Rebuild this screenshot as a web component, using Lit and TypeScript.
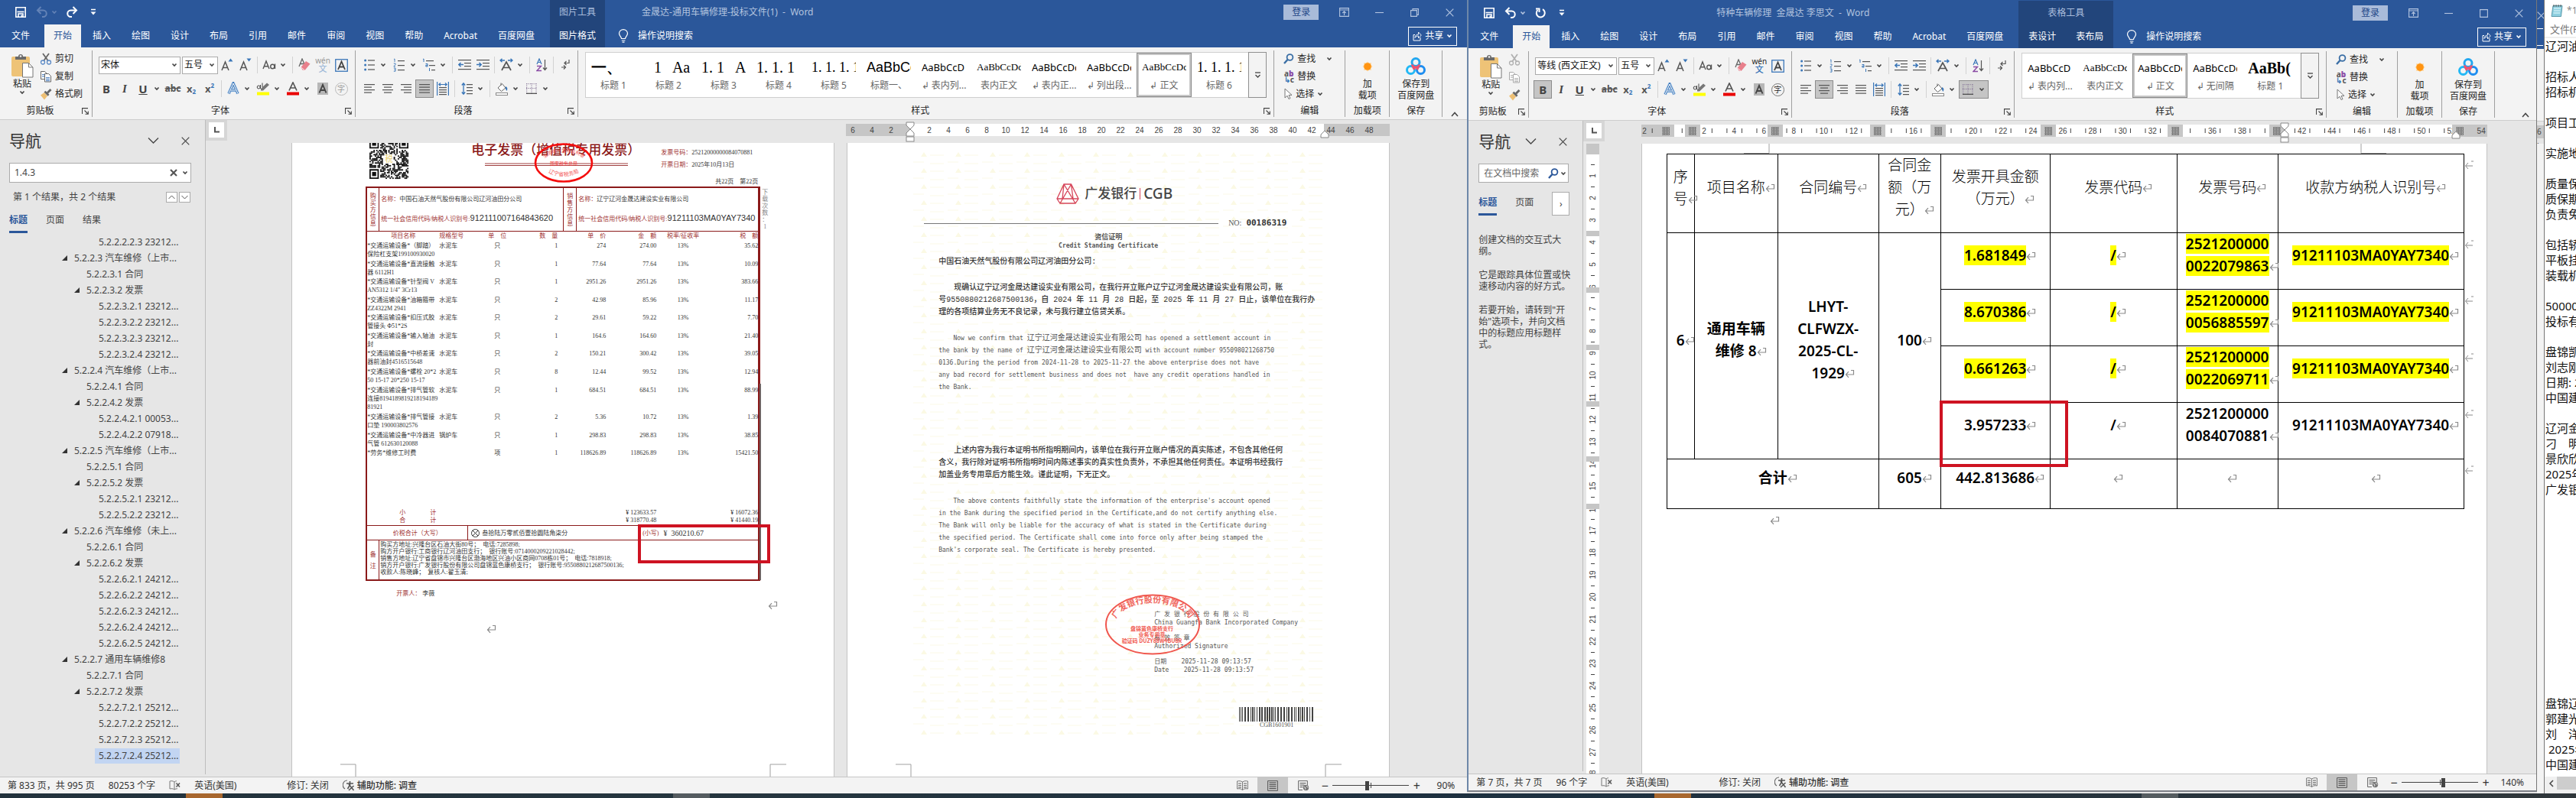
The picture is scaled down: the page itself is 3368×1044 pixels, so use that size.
import { LitElement, html, svg, css, nothing, TemplateResult } from "lit";
import { customElement, property } from "lit/decorators.js";

type Tpl = TemplateResult | typeof nothing;

const box = (w: number, h: number, body: unknown) =>
  html`<svg width=${w} height=${h} viewBox="0 0 ${w} ${h}" fill="none" aria-hidden="true">${body}</svg>`;

const chev = (color = "#444") => box(8, 6, svg`<path d="M1.5 1.5 4 4 6.5 1.5" stroke=${color} stroke-width="1.6"/>`);
const bigChev = () => box(15, 10, svg`<path d="M1 1.5 7.5 8 14 1.5" stroke="#444" stroke-width="1.3"/>`);
const cross = (color = "#444") => box(11, 11, svg`<path d="M.7.7 10.3 10.3M10.3.7.7 10.3" stroke=${color} stroke-width="1.2"/>`);
const ret = () => html`<span class="ret">${box(13, 12, svg`<path d="M8 1.5h3.5v5.500H1.500M5 3.200 1.500 7 5 10.800" stroke="#8a8a8a" stroke-width="1.200"/>`)}</span>`;

const lines = (rows: number[][], color = "#555") =>
  svg`${rows.map(([x, y, w]) => svg`<rect x=${x} y=${y} width=${w} height="1.200" fill=${color}/>`)}`;

const I = {
  save: () => box(16, 16, svg`<path d="M1.800 1.800h12.400v12.400H1.800z" stroke="#fff" stroke-width="1.600"/><path d="M3.500 7.500h9" stroke="#fff" stroke-width="1.600"/><path d="M5 14v-4h6v4" stroke="#fff" stroke-width="1.600"/><path d="M8.500 11.500h1.500V14H8.500z" fill="#fff"/>`),
  undo: (c: string) => box(16, 16, svg`<path d="M2 5.500h7.500a4 4 0 0 1 0 8.500H8" stroke=${c} stroke-width="2"/><path d="M6.500 1 2 5.500 6.500 10" stroke=${c} stroke-width="2"/>`),
  redo: () => box(16, 16, svg`<path d="M14 5.500H6.500a4 4 0 0 0 0 8.500H8" stroke="#fff" stroke-width="2"/><path d="M9.500 1 14 5.500 9.500 10" stroke="#fff" stroke-width="2"/>`),
  repeat: () => box(16, 16, svg`<path d="M4.500 4A5.500 5.500 0 1 0 11 3.200" stroke="#fff" stroke-width="2"/><path d="M2 2.500h4.500V7" stroke="#fff" stroke-width="2"/>`),
  more: () => box(8, 10, svg`<path d="M1 1.500h6" stroke="#fff" stroke-width="1.500"/><path d="M.5 4.500h7L4 8.500z" fill="#fff"/>`),
  ribbonOpt: () => box(13, 12, svg`<path d="M.6.6h11.800v10.800H.6zM.6 3h11.800M6.500 10V5M4.300 7 6.500 4.800 8.700 7" stroke="#b3c4df" stroke-width="1.100"/>`),
  min: () => box(11, 11, svg`<path d="M0 5.500h11" stroke="#b3c4df" stroke-width="1.100"/>`),
  restore: () => box(11, 11, svg`<path d="M.6 2.600h7.800v7.800H.6zM3 2.500V.6h7.400v7.800H8.500" stroke="#b3c4df" stroke-width="1.100"/>`),
  max: () => box(11, 11, svg`<path d="M.6.6h9.800v9.800H.6z" stroke="#b3c4df" stroke-width="1.100"/>`),
  bulb: () => box(14, 18, svg`<path d="M4.500 12.500C4.500 10 1.500 9 1.500 5.800a5.300 5 0 0 1 11 0C12.500 9 9.500 10 9.500 12.500zM4.800 15h4.600M5.500 17.200h3" stroke="#fff" stroke-width="1.200"/>`),
  share: () => box(12, 14, svg`<path d="M3 5.500H1v7.500h9V9" stroke="#fff"/><path d="M3 9.500C3 6.500 5 5 7.500 5V2l3.800 4-3.800 4V7C5.500 7 4 7.700 3 9.500z" stroke="#fff" stroke-width=".9"/>`),
  paste: () => box(30, 32, svg`<rect x="1" y="4" width="24" height="26" rx="2" fill="#eec377"/><path d="M6 8V4h4a3 3 0 0 1 6 0h4v4z" fill="#6a6a6a"/><circle cx="13" cy="3.500" r="1.300" fill="#f3f3f3"/><path d="M15.500 12.500h8l5.500 5.500v13H15.500z" fill="#fff" stroke="#777"/><path d="M23.500 12.500V18H29" stroke="#777"/>`),
  cut: (off: boolean) => box(16, 16, svg`<path d="M4 1l6.500 9M12 1 5.500 10" stroke=${off ? "#b0b0b0" : "#666"} stroke-width="1.800"/><circle cx="4" cy="12.500" r="2.500" stroke=${off ? "#b0b0b0" : "#5b8ac6"} stroke-width="1.300"/><circle cx="12" cy="12.500" r="2.500" stroke=${off ? "#b0b0b0" : "#5b8ac6"} stroke-width="1.300"/>`),
  copy: (off: boolean) => box(16, 16, svg`<path d="M1.500 1.500h5L9 4v7.500H1.500z" fill="#fff" stroke=${off ? "#a8a8a8" : "#666"}/><path d="M6.500 4.500h5l3 3v7.500h-8z" fill="#fff" stroke=${off ? "#a8a8a8" : "#666"}/>${lines([[3, 5, 3], [3, 7.500, 3], [8, 9, 5], [8, 11, 5], [8, 13, 5]], off ? "#b8b8b8" : "#5b8ac6")}`),
  brush: () => box(16, 16, svg`<path d="M1 9.500 6 6l4 4.500-4 5z" fill="#edbf74"/><path d="M5.500 5.500l2-1.800 5 5-1.800 2z" fill="#666"/><path d="M9 5.500 13.500 1 15.500 3l-4.500 4.500z" fill="#666"/>`),
  grow: (up: boolean) => box(18, 18, svg`<path d="M2 16 6.500 5 11 16M3.700 12.500h5.600" stroke="#555" stroke-width="1.500"/>${up ? svg`<path d="M10.500 4.500 13.500.5l3 4z" fill="#3a76b8"/>` : svg`<path d="M10.500.5h6l-3 4z" fill="#3a76b8"/>`}`),
  aa: () => box(18, 14, svg`<path d="M1 12 5 2l4 10M2.500 8.700h5" stroke="#555" stroke-width="1.400"/><ellipse cx="13.300" cy="9" rx="2.600" ry="2.800" stroke="#555" stroke-width="1.400"/><path d="M16.500 5.500V12" stroke="#555" stroke-width="1.400"/>`),
  eraser: () => box(16, 18, svg`<path d="M1 11 5 1l3.500 8M2.500 7.500H7" stroke="#666" stroke-width="1.300"/><path d="M3.500 12 10 4l5.500 3.500-7 8.500-3-.500z" fill="#e8808c"/><path d="M3.500 12l5 4" stroke="#fff" stroke-width=".8"/>`),
  outlineA: () => box(16, 18, svg`<path d="M2 15.500 8 2l6 13.500M4.500 11h7" stroke="#bcd5ef" stroke-width="4.500"/><path d="M2 15.500 8 2l6 13.500M4.500 11h7" stroke="#3a76b8" stroke-width="2.800"/><path d="M2 15.500 8 2l6 13.500M4.500 11h7" stroke="#fff" stroke-width="1"/>`),
  hilite: () => box(18, 18, svg`<path d="M6 9 14 1.500 17 4 9 11.500H6z" fill="#777"/><circle cx="3.200" cy="7" r="2" stroke="#444"/><path d="M5.500 4v5M8 1.500V7" stroke="#444"/><rect x="1" y="13.500" width="16" height="4" fill="#ff0"/>`),
  color: () => box(16, 18, svg`<path d="M3 11.500 8 1l5 10.500M5 8h6" stroke="#555" stroke-width="1.700"/><rect y="13.500" width="16" height="4" fill="#e90000"/>`),
  shadeA: () => box(14, 16, svg`<rect width="14" height="16" fill="#b7b7b7"/><path d="M2.500 13.500 7 3l4.500 10.500M4 10h6" stroke="#444" stroke-width="1.900"/>`),
  boxA: () => box(17, 17, svg`<rect x=".75" y=".75" width="15.500" height="15.500" stroke="#3a76b8" stroke-width="1.300"/><path d="M4 14 8.500 3.500 13 14M5.500 10.500h6" stroke="#444" stroke-width="1.800"/>`),
  bullets: () => box(14, 16, svg`${[2, 8, 14].map((y) => svg`<circle cx="1.600" cy=${y} r="1.500" fill="#3a76b8"/>`)}${lines([[5, 1.400, 9], [5, 7.400, 9], [5, 13.400, 9]])}`),
  numbers: () => box(16, 18, svg`<path d="M1 1.500 2 1v4M.8 7H3v1.500L.8 11H3M.8 13H3v2H1.500M3 15v2.200H.8" stroke="#3a76b8" stroke-width=".9"/>${lines([[6, 3, 9], [6, 9, 9], [6, 15, 9]])}`),
  multi: () => box(18, 18, svg`<path d="M1 1.500 2 1v4M4.500 7.500H7V11H4.800V9.300H7M9.500 13v4" stroke="#3a76b8" stroke-width="1"/>${lines([[5, 3, 10], [9, 9, 8], [12, 15, 5]])}`),
  indent: (inn: boolean) => box(17, 14, svg`${lines([[0, 0, 17], [8, 4, 9], [8, 8, 9], [0, 12, 17]])}${inn ? svg`<path d="M0 6.600h6M3.500 4 6.200 6.600 3.500 9.200" stroke="#3a76b8" stroke-width="1.500"/>` : svg`<path d="M7 6.600H1M3.500 4 .8 6.600 3.500 9.200" stroke="#3a76b8" stroke-width="1.500"/>`}`),
  asian: () => box(18, 18, svg`<path d="M3 16 9 5l6 11M5 12.500h8" stroke="#555" stroke-width="1.700"/><path d="M7 3H1.500M3.500.8 1 3l2.500 2.200M11 3h5.500M14.500.8 17 3l-2.500 2.200" stroke="#3a76b8" stroke-width="1.300"/>`),
  sort: () => box(15, 18, svg`<path d="M1 8 4 1l3 7M2 5.500h4" stroke="#3a76b8" stroke-width="1.200"/><path d="M1 10.500h5.500L1 16.500h6" stroke="#8a4ba5" stroke-width="1.400"/><path d="M11.500 2v13M9 12.500l2.500 3 2.500-3" stroke="#555" stroke-width="1.200"/>`),
  marks: () => box(13, 16, svg`<path d="M11 1v4.500H5M7.500 3 5 5.500 7.500 8M1 11h5M4 8.500 6.500 11 4 13.500" stroke="#555" stroke-width="1.200"/>`),
  left: () => box(14, 14, lines([[0, 1, 14], [0, 4.500, 10], [0, 8, 14], [0, 11.500, 10]])),
  center: () => box(14, 14, lines([[0, 1, 14], [2, 4.500, 10], [0, 8, 14], [2, 11.500, 10]])),
  right: () => box(14, 14, lines([[0, 1, 14], [4, 4.500, 10], [0, 8, 14], [4, 11.500, 10]])),
  just: () => box(14, 14, lines([[0, 1, 14], [0, 4.500, 14], [0, 8, 14], [0, 11.500, 14]])),
  dist: () => box(16, 18, svg`<path d="M.6 0v18M15.400 0v18M3 3.500h10M5 1.500l-2.200 2L5 5.500M11 1.500l2.200 2-2.200 2" stroke="#3a76b8" stroke-width="1.200"/>${lines([[3, 7, 10], [3, 10, 10], [3, 13, 10], [3, 16, 10]])}`),
  spacing: () => box(15, 18, svg`<path d="M3 2v14M.8 4.500 3 1.800l2.200 2.700M.8 13.500 3 16.200l2.200-2.700" stroke="#3a76b8" stroke-width="1.300"/>${lines([[7, 3, 8], [7, 7, 8], [7, 11, 8], [7, 15, 8]])}`),
  bucket: () => box(17, 18, svg`<path d="M3 8 8.500 2.500 13 8l-5.500 4.500z" fill="#fff" stroke="#666"/><path d="M7 5V1.500" stroke="#666"/><path d="M13 6c2.500 1 3 3 1.500 6C13 10 12.500 8 13 6z" fill="#3a76b8"/><rect x=".5" y="14.500" width="15" height="3" fill="#fff" stroke="#888"/>`),
  borders: () => box(14, 14, svg`<path d="M.7 0v13M7 0v13M13 0v13M0 .7h14M0 6.500h14" stroke="#8a7a9a" stroke-dasharray="1.200 1.200"/><path d="M0 13.300h14" stroke="#444" stroke-width="1.200"/>`),
  find: (c = "#3a6ea5") => box(14, 14, svg`<circle cx="8.500" cy="5" r="3.900" stroke=${c} stroke-width="1.800"/><path d="M5.500 8 1 13" stroke=${c} stroke-width="2.400"/>`),
  select: () => box(12, 16, svg`<path d="M2 1v12l3-2.800 2 4.300 2-.9-2-4.200H11z" fill="#fff" stroke="#777"/>`),
  dot: () => box(16, 16, svg`<path d="M8 1.500 10 3.500l3-.5-.5 3L14.500 8l-2 2 .5 3-3-.5-2 2-2-2-3 .5.500-3-2-2 2-2L3 3l3 .5z" fill="#ffd9a0"/><circle cx="8" cy="8" r="4.800" fill="#ff9412"/>`),
  baidu: () => box(26, 24, svg`<circle cx="13" cy="6.500" r="5" stroke="#22a7f0" stroke-width="3"/><circle cx="6.500" cy="16.500" r="5" stroke="#22b8f5" stroke-width="3"/><circle cx="19.500" cy="16.500" r="5" stroke="#1d8df0" stroke-width="3"/><path d="M8.500 9.500c0 5 9 4 9 0M9.500 12.500 11.500 16M16.500 12.500 14.500 16" stroke="#f2506e" stroke-width="3"/>`),
  launch: () => box(9, 9, svg`<path d="M.5 8V.6H8M3.500 3.500 8 8M8.300 4.500v3.800H4.500" stroke="#444" stroke-width="1.100"/>`),
  galMore: () => box(9, 8, svg`<path d="M1 1h7" stroke="#444" stroke-width="1.300"/><path d="M1.500 4 4.500 7l3-3" stroke="#444" stroke-width="1.300"/>`),
  up: () => box(10, 7, svg`<path d="M1 6 5 1.500 9 6" stroke="#444" stroke-width="1.500"/>`),
  book: () => box(15, 13, svg`<path d="M7 2C5 .5 3 .5 1 1v10c2-.5 4-.5 6 1zM7 2C8 1 9 .8 10 .8M7 12c1.500-1 2.500-1.200 4-1.200" stroke="#777"/><path d="M9.500 3.500l4.500 5M14 3.500l-4.500 5" stroke="#555" stroke-width="1.500"/>`),
  a11y: () => box(16, 15, svg`<path d="M6 1a6 6 0 0 0-3 11" stroke="#666" stroke-width="1.200"/><path d="M5 5h9M9.500 2v5L6.500 12M8 6l6.500 8M14.500 8 8 14" stroke="#555" stroke-width="1.600"/>`),
  read: () => box(15, 13, svg`<path d="M7.500 2v10.500M7.500 2C5 .5 3 .5.6 1v10c2.400-.5 4.400-.5 6.900 1.500 2.500-2 4.500-2 6.900-1.500V1C12 .5 10 .5 7.500 2z" stroke="#777"/>${lines([[2, 3.500, 4], [2, 6, 4], [2, 8.500, 4], [9, 3.500, 4], [9, 6, 4], [9, 8.500, 4]], "#777")}`),
  print: () => box(14, 14, svg`<path d="M.6.6h12.800v12.800H.6z" stroke="#555"/>${lines([[2.500, 2.500, 9], [2.500, 5, 9], [2.500, 7.500, 9], [2.500, 10, 9]], "#555")}`),
  web: () => box(15, 14, svg`<path d="M6 12.500H.6V.6h11.800V6" stroke="#666"/>${lines([[2.500, 3, 8], [2.500, 5.500, 6], [2.500, 8, 4]], "#666")}<circle cx="10.500" cy="9.500" r="3.700" fill="#777"/><path d="M8 8.500l2 1.200-.5 2M11 7l1 1.500 1.500.5" stroke="#f3f3f3" stroke-width=".9"/>`),
};

interface Style { sample: string; name: string; kind: string; on?: boolean }

@customElement("word-ribbon")
export class WordRibbon extends LitElement {
  @property({ type: Boolean }) compact = false;
  @property() docTitle = "";
  @property() toolLabel = "";
  @property({ attribute: false }) toolTabs: string[] = [];
  @property() fontName = "";
  @property({ attribute: false }) gallery: Style[] = [];

  static styles = css`
    :host { display: block; font: 12px/16px "Noto Sans", "Noto Sans CJK SC", sans-serif; color: #262626; }
    * { box-sizing: border-box; }
    svg { display: block; flex: none; }
    button { font: inherit; color: inherit; background: none; border: 0; padding: 0; margin: 0; display: inline-flex; align-items: center; justify-content: center; white-space: nowrap; }
    .head { display: grid; grid-template-columns: auto auto 1fr; grid-template-rows: 32px 30px; background: #2b579a; color: #fff; }
    .head.compact { padding-top: 1px; }
    .quick { display: flex; align-items: center; gap: 4px; padding-left: 13px; }
    .q { width: 27px; height: 24px; }
    .u { width: 22px; height: 24px; }
    .c { width: 10px; height: 24px; margin-left: -4px; }
    .title { flex: 1; color: #b3c4df; white-space: pre; }
    .mid { text-align: center; }
    .tool { background: #22457b; color: #a9bcdb; display: flex; align-items: center; padding: 0 12px; justify-content: center; margin-left: 8px; }
    .tooltabs { background: #22457b; display: flex; margin-left: 8px; }
    .tabs { display: flex; gap: 3px; padding-left: 3px; }
    .tab { padding: 0 12px; height: 30px; }
    .file { margin-right: 4px; }
    .tab.on { background: #f3f3f3; color: #2b579a; }
    .compact .tooltabs .tab { padding: 0 13px; }
    .rest { display: flex; align-items: center; }
    .rest.top { padding-left: 48px; }
    .login { width: 46px; height: 20px; background: #a9bbd9; color: #1f4788; margin-right: 10px; }
    .sys { width: 46px; height: 30px; }
    .ask { gap: 12px; padding-left: 17px; }
    .share { margin-left: auto; margin-right: 13px; width: 64px; height: 25px; border: 1px solid #fff; gap: 4px; }
    .bar { display: flex; height: 95px; background: #f3f3f3; border-bottom: 1px solid #cdcdcd; padding: 4px 0 2px; }
    .group { display: flex; flex-direction: column; border-right: 1px solid #a0a0a0; flex: none; height: 87px; }
    .grow { flex: 1 1 0; min-width: 0; }
    .ctl { flex: 1; min-height: 0; }
    .foot { display: flex; height: 16px; align-items: center; }
    .foot span { flex: 1; text-align: center; white-space: nowrap; }
    .foot button { width: 12px; height: 12px; margin-right: 3px; }
    .clip { width: 121px; }
    .compact .clip { width: 79px; }
    .clip .ctl { display: flex; padding-left: 14px; gap: 8px; }
    .pastebtn { flex-direction: column; justify-content: flex-start; padding-top: 4px; line-height: 14px; gap: 1px; }
    .small { display: flex; flex-direction: column; gap: 7px; padding-top: 3px; align-items: flex-start; }
    .small button { height: 16px; gap: 4px; }
    .font { padding-left: 6px; width: 344px; }
    .para { padding-left: 6px; width: 291px; }
    .rows { display: flex; flex-direction: column; gap: 7px; padding-top: 7px; }
    .row { display: flex; height: 24px; align-items: center; }
    .row > .b { width: 24px; height: 24px; flex: none; }
    .row > .d { width: 39px; height: 24px; flex: none; justify-content: flex-start; padding-left: 2px; }
    .d .ic { width: 20px; display: flex; justify-content: center; margin-right: 4px; }
    .on2 { background: #c5c5c5; outline: 1px solid #8c8c8c; outline-offset: -1px; }
    .sep { width: 1px; height: 22px; margin: 0 3px; background: #d2d2d2; flex: none; }
    .combo { display: flex; align-items: center; background: #fff; border: 1px solid #ababab; height: 23px; width: 107px; margin-left: 2px; padding-right: 3px; }
    .combo.size { width: 47px; }
    .combo select { appearance: none; border: 0; background: none; font: inherit; color: #111; flex: 1; min-width: 0; padding: 0 0 0 2px; text-overflow: clip; }
    .g { font-size: 15px; line-height: 18px; color: #444; }
    .bold { font-weight: 700; }
    .ital { font-family: "Liberation Serif", serif; font-style: italic; font-weight: 700; }
    .und { text-decoration: underline; font-weight: 700; }
    .st { font-size: 12px; text-decoration: line-through; font-weight: 700; color: #555; }
    .xx { font-size: 13px; font-weight: 700; color: #555; }
    .xx i { font-size: 8px; font-style: normal; color: #3a76b8; }
    .sub { align-self: flex-end; }
    .sup { align-self: flex-start; }
    .ruby { flex-direction: column; font-size: 10px; line-height: 9px; }
    .ruby b { font-size: 11px; line-height: 11px; font-weight: 500; color: #3a76b8; }
    .ring { width: 17px; height: 17px; border: 1px solid #777; border-radius: 50%; font-size: 10px; line-height: 15px; text-align: center; }
    .dim { opacity: .45; }
    .galwrap { padding: 2px 9px 0; }
    .gal { display: flex; height: 60px; background: #fff; border: 1px solid #cfcfcf; }
    .items { flex: 1; display: flex; min-width: 0; overflow: hidden; }
    .item { flex: none; width: 72px; height: 58px; border: 3px solid transparent; flex-direction: column; padding: 0 4px; align-items: center; overflow: hidden; }
    .item.on { border-color: #c6c6c6; outline: 1px solid #8a8a8a; outline-offset: -1px; }
    .sample { height: 28px; width: 58px; overflow: hidden; line-height: 28px; white-space: pre; text-align: left; color: #000; font-size: 12px; }
    .name { height: 18px; color: #666; margin-top: 2px; }
    .h { font-size: 20px; font-family: "Liberation Serif", "Noto Sans CJK SC", serif; }
    .m { font-size: 18px; font-family: "Liberation Serif", serif; }
    .big { font-size: 18px; font-family: "Liberation Sans", sans-serif; }
    .s { font-family: "Liberation Serif", serif; font-size: 13px; }
    .n { font-size: 13px; }
    .xl { font-size: 20px; font-family: "Liberation Serif", serif; font-weight: 700; }
    .galmore { width: 24px; border: 1px solid #8f8f8f; margin: -1px; background: #f3f3f3; }
    .edit { width: 93px; }
    .edit .small { padding-left: 12px; }
    .addin { width: 58px; }
    .baidu { width: 69px; }
    .tall { width: 100%; height: 68px; flex-direction: column; line-height: 15px; }
    .tall .pic { height: 34px; display: flex; align-items: center; padding-top: 4px; }
    .tail { width: 32px; display: flex; align-items: flex-end; justify-content: center; padding-bottom: 1px; }
    .compact .tail { width: 54px; justify-content: flex-end; padding-right: 9px; }
    .rep { display: grid; font-size: 10px; line-height: 8px; width: 14px; font-weight: 700; color: #555; }
    .rep b { color: #8a4ba5; }
    .rep em { color: #3a76b8; font-style: normal; }
  `;

  private b(icon: unknown, label: string, cls = "") {
    return html`<button class="b ${cls}" aria-label=${label}>${icon}</button>`;
  }
  private d(icon: unknown, label: string, cls = "") {
    return html`<button class="d ${cls}" aria-label=${label}><span class="ic">${icon}</span>${chev()}</button>`;
  }

  render() {
    const tabs = ["文件", "开始", "插入", "绘图", "设计", "布局", "引用", "邮件", "审阅", "视图", "帮助", "Acrobat", "百度网盘"];
    const c = this.compact;
    const sep = html`<span class="sep"></span>`;
    const foot = (t: string, l = true) => html`<div class="foot"><span>${t}</span>${l ? html`<button aria-label="${t}设置">${I.launch()}</button>` : nothing}</div>`;
    const pale = "#b3c4df";
    return html`
      <header class="head ${c ? "compact" : ""}">
        <div class="quick">
          <button class="q" aria-label="保存">${I.save()}</button>
          <button class="u" aria-label="撤消">${I.undo(c ? "#fff" : "#6483b7")}</button>
          <button class="c" aria-label="撤消列表">${chev(c ? "#b3c4df" : "#6483b7")}</button>
          <button class="q" aria-label="重复">${c ? I.repeat() : I.redo()}</button>
          <button class="u" aria-label="自定义">${I.more()}</button>
          ${c ? html`<span class="title mid">${this.docTitle}</span>` : nothing}
        </div>
        <div class="tool">${this.toolLabel}</div>
        <div class="rest top">
          <span class="title">${c ? "" : this.docTitle}</span>
          <button class="login">登录</button>
          <button class="sys" aria-label="功能区显示选项">${I.ribbonOpt()}</button>
          <button class="sys" aria-label="最小化">${I.min()}</button>
          <button class="sys" aria-label="还原">${c ? I.max() : I.restore()}</button>
          <button class="sys" aria-label="关闭">${cross(pale)}</button>
        </div>
        <nav class="tabs">${tabs.map((t, i) => html`<button class="tab ${["file", "on"][i] ?? ""}">${t}</button>`)}</nav>
        <div class="tooltabs">${this.toolTabs.map((t) => html`<button class="tab">${t}</button>`)}</div>
        <div class="rest">
          <button class="ask">${I.bulb()}操作说明搜索</button>
          <button class="share">${I.share()}共享${chev("#fff")}</button>
        </div>
      </header>
      <div class="bar ${c ? "compact" : ""}">
        <section class="group clip">
          <div class="ctl">
            <button class="pastebtn">${I.paste()}<span>粘贴</span>${chev()}</button>
            <div class="small">
              <button aria-label="剪切">${I.cut(c)}${c ? nothing : "剪切"}</button>
              <button aria-label="复制">${I.copy(c)}${c ? nothing : "复制"}</button>
              <button aria-label="格式刷">${I.brush()}${c ? nothing : "格式刷"}</button>
            </div>
          </div>
          ${foot("剪贴板")}
        </section>
        <section class="group font">
          <div class="ctl rows">
            <div class="row">
              <label class="combo"><select aria-label="字体"><option>${this.fontName}</option></select>${chev()}</label>
              <label class="combo size"><select aria-label="字号"><option>五号</option></select>${chev()}</label>
              ${this.b(I.grow(true), "增大字号")}${this.b(I.grow(false), "减小字号")}${sep}
              ${this.d(I.aa(), "更改大小写")}${sep}
              ${this.b(I.eraser(), "清除格式")}
              <button class="b ruby ${c ? "" : "dim"}"><span>wén</span><b>文</b></button>
              ${this.b(I.boxA(), "字符边框")}
            </div>
            <div class="row">
              <button class="b g bold ${c ? "on2" : ""}">B</button><button class="b g ital">I</button>
              ${this.d(html`<span class="g und">U</span>`, "下划线")}
              <button class="b st">abc</button><button class="b xx">x<i class="sub">2</i></button><button class="b xx">x<i class="sup">2</i></button>${sep}
              ${this.d(I.outlineA(), "文本效果")}${this.d(I.hilite(), "突出显示")}${this.d(I.color(), "字体颜色")}
              ${this.b(I.shadeA(), "字符底纹")}
              <button class="b ${c ? "" : "dim"}"><span class="ring">字</span></button>
            </div>
          </div>
          ${foot("字体")}
        </section>
        <section class="group para">
          <div class="ctl rows">
            <div class="row">
              ${this.d(I.bullets(), "项目符号")}${this.d(I.numbers(), "编号")}${this.d(I.multi(), "多级列表")}${sep}
              ${this.b(I.indent(false), "减少缩进")}${this.b(I.indent(true), "增加缩进")}${sep}
              ${this.d(I.asian(), "中文版式")}${sep}${this.b(I.sort(), "排序")}${sep}${this.b(I.marks(), "编辑标记")}
            </div>
            <div class="row">
              ${this.b(I.left(), "左对齐")}${this.b(I.center(), "居中", c ? "on2" : "")}${this.b(I.right(), "右对齐")}
              ${this.b(I.just(), "两端对齐", c ? "" : "on2")}${this.b(I.dist(), "分散对齐")}${sep}
              ${this.d(I.spacing(), "行距")}${sep}${this.d(I.bucket(), "底纹")}${this.d(I.borders(), "边框", c ? "on2" : "")}
            </div>
          </div>
          ${foot("段落")}
        </section>
        <section class="group grow">
          <div class="ctl galwrap">
            <div class="gal">
              <div class="items">
                ${this.gallery.map((s) => html`<button class="item ${s.on ? "on" : ""}"><span class="sample ${s.kind}">${s.sample}</span><span class="name">${s.name}</span></button>`)}
              </div>
              <button class="galmore" aria-label="其他样式">${I.galMore()}</button>
            </div>
          </div>
          ${foot("样式")}
        </section>
        <section class="group edit">
          <div class="ctl small">
            <button>${I.find()}查找<span class="c"></span>${chev()}</button>
            <button><span class="rep"><span>a<b>b</b></span><span><em>↳</em>c</span></span>替换</button>
            <button>${I.select()}选择${chev()}</button>
          </div>
          ${foot("编辑", false)}
        </section>
        <section class="group addin">
          <div class="ctl"><button class="tall"><span class="pic">${I.dot()}</span><span>加</span><span>载项</span></button></div>
          ${foot("加载项", false)}
        </section>
        <section class="group baidu">
          <div class="ctl"><button class="tall"><span class="pic">${I.baidu()}</span><span>保存到</span><span>百度网盘</span></button></div>
          ${foot("保存", false)}
        </section>
        <div class="tail"><button aria-label="折叠功能区">${I.up()}</button></div>
      </div>`;
  }
}

@customElement("word-status")
export class WordStatus extends LitElement {
  @property() pages = "";
  @property() words = "";
  @property() zoom = "";
  @property({ type: Number }) level = 50;

  static styles = css`
    :host { display: flex; flex: none; height: 22px; background: #f3f3f3; border-top: 1px solid #c6c6c6; font: 12px/16px "Noto Sans", "Noto Sans CJK SC", sans-serif; color: #333; align-items: center; }
    svg { display: block; }
    button { font: inherit; color: inherit; background: none; border: 0; padding: 0; display: flex; align-items: center; justify-content: center; gap: 3px; height: 100%; white-space: nowrap; }
    .left { display: flex; align-items: center; gap: 18px; padding-left: 10px; flex: 1; height: 100%; }
    .rev { margin-left: 48px; }
    .acc { font-weight: 500; }
    .v { width: 40px; }
    .v.on { background: #c6c6c6; }
    .pm { width: 16px; font-size: 16px; }
    input { appearance: none; width: 100px; height: 14px; margin: 0 2px; background: linear-gradient(#444, #444) center / 100% 1px no-repeat, linear-gradient(#444, #444) center / 1px 7px no-repeat; }
    input::-webkit-slider-thumb { appearance: none; width: 5px; height: 12px; background: #444; }
    .z { width: 38px; margin: 0 16px 0 4px; justify-content: flex-end; }
  `;

  render() {
    return html`
      <div class="left">
        <button>${this.pages}</button><button>${this.words}</button><button aria-label="校对">${I.book()}</button><button>英语(美国)</button>
        <button class="rev">修订: 关闭</button><button class="acc">${I.a11y()}辅助功能: 调查</button>
      </div>
      <button class="v" aria-label="阅读视图">${I.read()}</button>
      <button class="v on" aria-label="页面视图">${I.print()}</button>
      <button class="v" aria-label="Web 版式">${I.web()}</button>
      <button class="pm">−</button>
      <input type="range" aria-label="缩放" .value=${String(this.level)} />
      <button class="pm">+</button>
      <button class="z">${this.zoom}</button>`;
  }
}

interface Node { level: number; text: string; open?: boolean; on?: boolean }
const tree: Node[] = [
  { level: 3, text: "5.2.2.2.2.3 23212..." },
  { level: 1, text: "5.2.2.3 汽车维修（上市...", open: true },
  { level: 2, text: "5.2.2.3.1 合同" },
  { level: 2, text: "5.2.2.3.2 发票", open: true },
  { level: 3, text: "5.2.2.3.2.1 23212..." },
  { level: 3, text: "5.2.2.3.2.2 23212..." },
  { level: 3, text: "5.2.2.3.2.3 23212..." },
  { level: 3, text: "5.2.2.3.2.4 23212..." },
  { level: 1, text: "5.2.2.4 汽车维修（上市...", open: true },
  { level: 2, text: "5.2.2.4.1 合同" },
  { level: 2, text: "5.2.2.4.2 发票", open: true },
  { level: 3, text: "5.2.2.4.2.1 00053..." },
  { level: 3, text: "5.2.2.4.2.2 07918..." },
  { level: 1, text: "5.2.2.5 汽车维修（上市...", open: true },
  { level: 2, text: "5.2.2.5.1 合同" },
  { level: 2, text: "5.2.2.5.2 发票", open: true },
  { level: 3, text: "5.2.2.5.2.1 23212..." },
  { level: 3, text: "5.2.2.5.2.2 23212..." },
  { level: 1, text: "5.2.2.6 汽车维修（未上...", open: true },
  { level: 2, text: "5.2.2.6.1 合同" },
  { level: 2, text: "5.2.2.6.2 发票", open: true },
  { level: 3, text: "5.2.2.6.2.1 24212..." },
  { level: 3, text: "5.2.2.6.2.2 24212..." },
  { level: 3, text: "5.2.2.6.2.3 24212..." },
  { level: 3, text: "5.2.2.6.2.4 24212..." },
  { level: 3, text: "5.2.2.6.2.5 24212..." },
  { level: 1, text: "5.2.2.7 通用车辆维修8", open: true },
  { level: 2, text: "5.2.2.7.1 合同" },
  { level: 2, text: "5.2.2.7.2 发票", open: true },
  { level: 3, text: "5.2.2.7.2.1 25212..." },
  { level: 3, text: "5.2.2.7.2.2 25212..." },
  { level: 3, text: "5.2.2.7.2.3 25212..." },
  { level: 3, text: "5.2.2.7.2.4 25212...", on: true },
];

const items: [string[], string, string, string, string, string, string][] = [
  [["*交通运输设备*（脚踏）", "保险杠支架199100930020"], "水泥车", "只", "1", "274", "274.00", "35.62"],
  [["*交通运输设备*直流接触", "器 6112H1"], "水泥车", "只", "1", "77.64", "77.64", "10.09"],
  [["*交通运输设备*针型阀 V", "AN5312 1/4″ 3Cr13"], "水泥车", "只", "1", "2951.26", "2951.26", "383.66"],
  [["*交通运输设备*油箱箍带", "ZZ4322M 2941"], "水泥车", "只", "2", "42.98", "85.96", "11.17"],
  [["*交通运输设备*扣压式胶", "管接头 Φ51*2S"], "水泥车", "只", "2", "29.61", "59.22", "7.70"],
  [["*交通运输设备*输入轴油", "封"], "水泥车", "只", "1", "164.6", "164.60", "21.40"],
  [["*交通运输设备*中桥差速", "器前油封4516515648"], "水泥车", "只", "2", "150.21", "300.42", "39.05"],
  [["*交通运输设备*螺栓 20*2", "50 15-17 20*250 15-17"], "水泥车", "只", "8", "12.44", "99.52", "12.94"],
  [["*交通运输设备*排气管软", "连接8194189819218194189", "81921"], "水泥车", "只", "1", "684.51", "684.51", "88.99"],
  [["*交通运输设备*排气管接", "口垫 190003802576"], "水泥车", "只", "2", "5.36", "10.72", "1.39"],
  [["*交通运输设备*中冷器进", "气管 612630120088"], "锅炉车", "只", "1", "298.83", "298.83", "38.85"],
  [["*劳务*维修工时费"], "", "项", "1", "118626.89", "118626.89", "15421.50"],
];

const notes = [
  "辽河油田", "", "招标人:", "招标机构", "", "项目工程", "", "实施地点", "", "质量保证", "质保期内", "负责免费", "",
  "包括轿车", "平板挂车", "装载机等", "", "50000元", "投标有效", "", "盘锦凯达", "刘志刚", "日期: 20", "中国建设", "",
  "辽河金晟", "刁　明宇", "景欣欣", "2025年", "广发银行", "", "", "", "", "", "", "", "", "", "", "", "", "",
  "盘锦辽河", "郭建光", "刘　洋", " 2025年", "中国建设",
];

const qr = () => {
  const n = 29;
  const cells: unknown[] = [];
  let seed = 77;
  const inFinder = (x: number, y: number) => (x < 8 && y < 8) || (x > n - 9 && y < 8) || (x < 8 && y > n - 9);
  for (let y = 0; y < n; y++)
    for (let x = 0; x < n; x++) {
      seed = (seed * 1103515 + 12345) % 2147483648;
      const mid = Math.abs(x - 14) < 4 && Math.abs(y - 14) < 4;
      if (!inFinder(x, y) && !mid && (seed >> 12) % 2) cells.push(svg`<rect x=${x} y=${y} width="1.050" height="1.050"/>`);
    }
  const finder = (x: number, y: number) => svg`<path fill-rule="evenodd" d="M${x} ${y}h7v7h-7zM${x + 1} ${y + 1}v5h5v-5z"/><rect x=${x + 2} y=${y + 2} width="3" height="3"/>`;
  return html`<svg class="qr" width="51" height="47" viewBox="0 3 29 26" preserveAspectRatio="none" fill="#111" aria-hidden="true">
    ${cells}${finder(0, 0)}${finder(22, 0)}${finder(0, 22)}
    <text x="11.500" y="17" font-size="6" fill="#e7cf72">税</text></svg>`;
};

/* Horizontal ruler scale, drawn as one graphic: shaded margins, numbers, ticks and column handles. */
const handle = (x: number, top: number) => svg`
  <path d="M${x - 5} ${top}h10v4l-5 5-5-5z" fill="#fff" stroke="#888"/>
  <path d="M${x - 5} ${top + 18}v-4l5-5 5 5v4z" fill="#fff" stroke="#888"/>
  <rect x=${x - 5} y=${top + 19} width="10" height="6" fill="#fff" stroke="#888"/>`;
const rightMark = (x: number) => svg`<path d="M${x - 5} 23v-4l5-5 5 5v4z" fill="#fff" stroke="#888"/>`;

@customElement("app-root")
export class AppRoot extends LitElement {
  static styles = css`
    :host { display: flex; flex-direction: column; height: 100vh; overflow: hidden; background: #e6e6e6; font: 12px/16px "Noto Sans", "Noto Sans CJK SC", sans-serif; color: #444; }
    * { box-sizing: border-box; }
    svg { display: block; flex: none; overflow: visible; }
    p, h1, h2, ul { margin: 0; padding: 0; font-weight: 400; }
    button { font: inherit; color: inherit; background: none; border: 0; padding: 0; display: inline-flex; align-items: center; justify-content: center; }
    .desk { flex: 1; min-height: 0; display: flex; }
    .win { display: flex; flex-direction: column; min-width: 0; overflow: hidden; background: #e6e6e6; }
    .one { flex: 1920 1 0; }
    .two { flex: 1397 1 0; border-left: 2px solid #6d87a8; border-right: 1px solid #777; border-bottom: 2px solid #7d8087; margin-bottom: 2px; }
    .behind { flex: none; width: 9px; display: flex; flex-direction: column; overflow: hidden; background: #e6e6e6; }
    .behind .blue { height: 64px; background: #2b579a; padding: 15px 0 0 0; }
    .behind .blue i { display: block; width: 8px; height: 23px; border: solid #fff; border-width: 1px 0; margin-top: 11px; }
    .behind .pale { height: 95px; background: #f3f3f3; border-bottom: 1px solid #cdcdcd; }
    .behind .num { height: 17px; margin-top: 5px; background: #c6c6c6; line-height: 17px; font-size: 10px; }
    .behind .sheet { flex: 1; margin-top: 7px; background: #f3f3f3; }
    .note { flex: 41 1 0; min-width: 0; background: #fff; border-left: 1px solid #777; overflow: hidden; display: flex; flex-direction: column; color: #111; }
    .note .cap { height: 28px; display: flex; align-items: center; gap: 4px; padding-left: 8px; color: #888; flex: none; }
    .note .menu { height: 22px; border-bottom: 2px solid #eee; padding: 2px 0 0 7px; color: #777; font-size: 13px; white-space: nowrap; flex: none; }
    .note pre { flex: 1; margin: 0; padding: 0 0 0 1px; font: 15px/20px "Noto Sans", "Noto Sans CJK SC", sans-serif; overflow: hidden; }
    .note .sb { height: 17px; display: flex; background: #f0f0f0; align-items: center; padding-left: 6px; gap: 4px; flex: none; }
    .note .sb i { flex: 1; height: 100%; background: #cdcdcd; }
    .note .low { height: 5px; background: #f0f0f0; flex: none; }
    .taskbar { height: 6px; flex: none; background: linear-gradient(90deg, #22323c, #26363f 30%, #1d3040 60%, #30373b); display: flex; }
    .taskbar i { width: 48px; height: 6px; margin-left: 243px; background: #a8672e; }
    .taskbar .g { margin-left: 589px; background: #555c60; }
    .taskbar .far { margin-left: 1235px; }

    .work { flex: 1; min-height: 0; display: flex; }
    .pane { flex: none; width: 269px; margin-bottom: 3px; border-right: 1px solid #bdbdbd; padding: 13px 0 0 12px; overflow: hidden; }
    .two .pane { width: 150px; padding-left: 13px; }
    .ph { display: flex; align-items: center; height: 28px; padding-right: 18px; }
    .ph h2 { font-size: 21px; line-height: 28px; color: #333; flex: 1; white-space: nowrap; }
    .ph button { width: 16px; height: 16px; }
    .ph .x { margin-left: 26px; }
    .find { display: flex; align-items: center; gap: 6px; width: 238px; height: 26px; margin-top: 15px; background: #fff; border: 1px solid #ababab; padding: 0 3px 0 6px; }
    .find input { flex: 1; min-width: 0; border: 0; background: none; padding: 0; font: inherit; color: #444; }
    .find input::placeholder { color: #666; }
    .two .find { width: 118px; height: 25px; gap: 2px; padding-right: 2px; }
    .res { display: flex; align-items: center; height: 14px; margin-top: 12px; padding: 0 19px 0 5px; gap: 2px; }
    .res span { flex: 1; }
    .res button { width: 15px; height: 14px; border: 1px solid #ababab; background: #fff; }
    .ptabs { display: flex; gap: 24px; margin-top: 15px; align-items: flex-start; }
    .ptabs .t { height: 25px; padding-bottom: 6px; border-bottom: 3px solid transparent; }
    .ptabs .t.on { color: #2b579a; font-weight: 700; border-color: #2b579a; }
    .two .ptabs { margin-top: 12px; align-items: flex-end; }
    .more { width: 23px; height: 31px; background: #fff; border: 1px solid #ababab; }
    .tree { list-style: none; margin-top: 1px; }
    .tree li { display: flex; align-items: center; height: 21px; white-space: nowrap; }
    .tree .mk { width: 16px; flex: none; }
    .l1 { padding-left: 69px; }
    .l2 { padding-left: 85px; }
    .l3 { padding-left: 101px; }
    .tree button { height: 20px; }
    .tree .on button { background: #c2d5f2; padding: 0 2px 0 5px; margin-left: -5px; }
    .hint { margin-top: 24px; width: 124px; line-height: 15px; }
    .hint p + p { margin-top: 16px; }

    .canvas { flex: 1; min-width: 0; display: grid; grid-template-columns: 28px 1fr 17px; grid-template-rows: 30px 1fr; overflow: hidden; }
    .corner { background: #d6d6d6; height: 27px; padding: 3px 0 0 4px; }
    .corner button { width: 20px; height: 20px; background: #fff; }
    .centre { display: flex; justify-content: center; gap: 16px; min-width: 0; min-height: 0; }
    .blank { width: 710px; flex: none; }
    .ruler { flex: none; font: 10px/10px "Liberation Sans", sans-serif; fill: #444; }
    .paper { position: relative; flex: none; width: 710px; background: #fff; border-left: 1px solid #c3c3c3; border-right: 1px solid #c3c3c3; overflow: hidden; }
    .two .paper { width: 1106px; }
    .two .ret { display: inline-block; width: 0; height: 12px; }
    .vr { margin-left: 4px; margin-top: 0; font: 10px/10px "Liberation Sans", sans-serif; fill: #444; overflow: hidden; }
    .corners { position: absolute; left: 0; bottom: 0; }
    .floating { position: absolute; }
    .a1 { left: 622px; top: 599px; }
    .a2 { left: 254px; top: 630px; }
    .redbox { position: absolute; border: 4px solid #ce1322; }

    .inv { width: 516px; margin-left: 96px; font: 8px/11px "Liberation Serif", "Noto Sans CJK SC", serif; color: #333; position: relative; }
    .inv .red { color: #a03030; }
    .ih { display: grid; grid-template-columns: 138px 1fr 130px; height: 57px; }
    .qr { margin-left: 5px; font-family: "Noto Sans CJK SC", sans-serif; }
    .it { width: 223px; font-size: 17px; line-height: 20px; font-weight: 500; color: #8b1a1a; white-space: nowrap; }
    .im { padding-top: 5px; line-height: 16px; white-space: nowrap; }
    .im div:last-child { text-align: right; padding-right: 3px; line-height: 28px; }
    .frame { height: 516px; border: 2px solid #8b1a1a; border-right-width: 3px; display: flex; flex-direction: column; }
    .party { display: grid; grid-template-columns: 16px 241px 17px 1fr; height: 57px; border-bottom: 1px solid #8b1a1a; flex: none; }
    .party > * { border-right: 1px solid #8b1a1a; }
    .party > :last-child { border: 0; }
    .vert { display: flex; align-items: center; justify-content: center; text-align: center; line-height: 9px; color: #a03030; }
    .who { padding: 9px 0 0 2px; white-space: nowrap; }
    .who p + p { margin-top: 13px; }
    .id { font: 11px/12px "Liberation Sans", sans-serif; }
    .items { width: 100%; height: 296px; table-layout: fixed; border-collapse: collapse; flex: none; }
    .items td, .items th { padding: 0; vertical-align: top; text-align: right; font-weight: 400; white-space: nowrap; }
    .items th { height: 13px; color: #a03030; }
    .items .L { text-align: left; }
    .items .C { text-align: center; }
    .fill { flex: 1; }
    .sum { display: grid; grid-template-columns: 40px 256px 39px 1fr; height: 10px; line-height: 10px; padding-left: 42px; flex: none; white-space: nowrap; }
    .sum :last-child { text-align: right; }
    .total { display: flex; align-items: center; height: 20px; border-top: 1px solid #8b1a1a; border-bottom: 1px solid #8b1a1a; margin-top: 1px; flex: none; }
    .total .k { width: 132px; height: 100%; border-right: 1px solid #8b1a1a; display: flex; align-items: center; justify-content: center; }
    .total .w { width: 228px; display: flex; align-items: center; gap: 3px; padding-left: 4px; }
    .total .n { font-size: 10px; padding-left: 6px; white-space: pre; }
    .remark { display: grid; grid-template-columns: 16px 1fr; height: 51px; flex: none; line-height: 9px; }
    .remark .vert { border-right: 1px solid #8b1a1a; line-height: 15px; }
    .remark div { padding: 1px 0 0 1px; white-space: nowrap; }
    .by { padding: 11px 0 0 40px; white-space: pre; }
    .side { position: absolute; left: 517px; top: 60px; width: 10px; line-height: 9px; color: #888; text-align: center; }
    .seal { position: absolute; left: 220px; top: 0; font-family: "Noto Sans CJK SC", sans-serif; }
    .shadow { position: absolute; left: 515px; top: 315px; width: 2px; height: 257px; background: #6f6262; }

    .cert { position: relative; margin: 10px 0 0 84px; width: 540px; height: 769px; padding-top: 41px; font: 8px/16px "DejaVu Sans Mono", "Noto Sans CJK SC", monospace; color: #555; }
    .bg { position: absolute; left: 0; top: 0; }
    .logo { position: relative; display: flex; align-items: center; height: 30px; padding-left: 189px; gap: 7px; color: #444; font: 500 17px/30px "Noto Sans", "Noto Sans CJK SC", sans-serif; white-space: nowrap; }
    .logo i { width: 1px; height: 15px; background: #d6455a; margin: 0 -3px; }
    .logo .en { font-size: 19px; }
    .no { position: relative; display: flex; align-items: center; height: 16px; margin-top: 16px; padding-left: 16px; }
    .no i { width: 385px; height: 1px; background: #777; margin-right: 13px; }
    .no span { font: 10px/16px "Liberation Serif", serif; margin-right: 6px; }
    .no b { font-size: 11px; color: #333; }
    .ct { position: relative; margin-top: 5px; line-height: 11px; text-align: center; padding-right: 26px; font-weight: 700; color: #555; }
    .ct h1 { font-size: 9px; line-height: 11px; font-weight: 700; }
    .blk { position: relative; padding-left: 35px; white-space: pre; margin-top: 18px; }
    .blk.cn, .blk em { font-size: 10px; font-style: normal; }
    .blk em { line-height: 10px; }
    .blk.cn { font-weight: 500; color: #333; font-family: "Liberation Mono", "Noto Sans CJK SC", monospace; }
    .blk.cn s { text-decoration: none; font-size: 8px; font-weight: 700; }
    .blk.first { margin-top: 8px; }
    .blk.late { margin-top: 67px; }
    .sign { position: relative; padding-left: 317px; margin-top: 70px; line-height: 11px; white-space: pre; }
    .sign p:nth-child(odd) { margin-top: 9px; }
    .sign p:first-child { margin-top: 0; }
    .bar { position: relative; margin: 43px 0 0 428px; width: 98px; text-align: center; font: 8px/10px "Liberation Serif", serif; }
    .stamp { position: absolute; left: 252px; top: 579px; font: 700 9px/10px "Noto Sans CJK SC", sans-serif; }

    .doc { padding: 13px 0 0 32px; position: relative; color: #000; }
    .tb { border-collapse: collapse; table-layout: fixed; width: 1042px; font: 19px/29px "Noto Sans", "Noto Sans CJK SC", sans-serif; font-weight: 600; }
    .tb th, .tb td { border: 1px solid #000; padding: 0 0 15px; text-align: center; vertical-align: middle; }
    .tb th { font-weight: 300; white-space: nowrap; }
    .tb mark { background: #ff0; color: inherit; }
    .after { padding-left: 135px; margin-top: 9px; }
    .ends { position: absolute; left: 1075px; top: 23px; }
    .tops { position: absolute; left: 0; top: 0; }
  `;

  private pane1() {
    return html`<aside class="pane">
      <div class="ph"><h2>导航</h2><button aria-label="选项">${bigChev()}</button><button class="x" aria-label="关闭">${cross()}</button></div>
      <div class="find"><input aria-label="搜索" value="1.4.3" /><button aria-label="清除">${box(10, 10, svg`<path d="M1 1l8 8M9 1 1 9" stroke="#555" stroke-width="2.200"/>`)}</button>${chev()}</div>
      <div class="res"><span>第 1 个结果，共 2 个结果</span>
        <button aria-label="上一个">${box(9, 6, svg`<path d="M.5 5 4.500 1l4 4" stroke="#555"/>`)}</button>
        <button aria-label="下一个">${box(9, 6, svg`<path d="M.5 1l4 4 4-4" stroke="#555"/>`)}</button></div>
      <div class="ptabs"><button class="t on">标题</button><button class="t">页面</button><button class="t">结果</button></div>
      <ul class="tree">
        ${tree.map((n) => html`<li class="l${n.level} ${n.on ? "on" : ""}"><span class="mk">${n.open ? box(7, 7, svg`<path d="M7 0v7H0z" fill="#333"/>`) : nothing}</span><button>${n.text}</button></li>`)}
      </ul>
    </aside>`;
  }

  private ruler1() {
    const nums = Array.from({ length: 28 }, (_, i) => i * 2 - 6).filter((n) => n !== 0 && n <= 48);
    return html`<svg class="ruler" width="710" height="30" aria-hidden="true">
      <rect x="-1" y="5" width="711" height="16" fill="#c6c6c6"/><rect x="83" y="5" width="541" height="16" fill="#fff"/>
      ${nums.map((n) => svg`<text x=${83 + n * 12.5} y="17" text-anchor="middle">${Math.abs(n)}</text>`)}
      ${handle(83, 3)}${rightMark(625)}
    </svg>`;
  }

  private invoice() {
    const th = (t: string, c = "") => html`<th class=${c}>${t}</th>`;
    const w = [94, 55, 42, 58, 63, 66, 70, 63];
    return html`<div class="paper">
      <div class="inv">
        <div class="ih">
          ${qr()}
          <div><h1 class="it">电子发票（增值税专用发票）</h1></div>
          <div class="im"><div><span class="red">发票号码：</span>25212000000084070881</div><div><span class="red">开票日期：</span>2025年10月13日</div><div>共22页　第22页</div></div>
        </div>
        <div class="frame">
          <div class="party">
            <div class="vert">购<br />买<br />方<br />信<br />息</div>
            <div class="who"><p><span class="red">名称：</span>中国石油天然气股份有限公司辽河油田分公司</p><p><span class="red">统一社会信用代码/纳税人识别号:</span><span class="id">912111007164843620</span></p></div>
            <div class="vert">销<br />售<br />方<br />信<br />息</div>
            <div class="who"><p><span class="red">名称：</span>辽宁辽河金晟达建设实业有限公司</p><p><span class="red">统一社会信用代码/纳税人识别号:</span><span class="id">91211103MA0YAY7340</span></p></div>
          </div>
          <table class="items">
            <colgroup>${w.map((x) => html`<col width=${x} />`)}</colgroup>
            <thead><tr>${th("项目名称", "C")}${th("规格型号", "L")}${th("单　位", "C")}${th("数　量")}${th("单　价")}${th("金　额")}${th("税率/征收率", "C")}${th("税　额")}</tr></thead>
            <tbody>${items.map((r) => html`<tr><td class="L">${r[0].map((l, i) => html`${i ? html`<br />` : nothing}${l}`)}</td><td class="L">${r[1]}</td><td class="C">${r[2]}</td><td>${r[3]}</td><td>${r[4]}</td><td>${r[5]}</td><td class="C">13%</td><td>${r[6]}</td></tr>`)}</tbody>
          </table>
          <div class="fill"></div>
          <div class="sum"><span class="red">小</span><span class="red">计</span><span>¥ 123633.57</span><span>¥ 16072.36</span></div>
          <div class="sum"><span class="red">合</span><span class="red">计</span><span>¥ 318770.48</span><span>¥ 41440.19</span></div>
          <div class="total"><span class="k red">价税合计（大写）</span><span class="w">${box(11, 11, svg`<circle cx="5.500" cy="5.500" r="5" stroke="#333"/><path d="M2 2l7 7M9 2 2 9" stroke="#333"/>`)}叁拾陆万零贰佰壹拾圆陆角柒分</span><span class="red">(小写)</span><span class="n">¥  360210.67</span></div>
          <div class="remark"><span class="vert">备<br />注</span><div>
            购买方地址:兴隆台区石油大街80号；　电话:7285898;<br />购方开户银行:工商银行辽河油田支行；　银行账号:0714000209221028442;<br />销售方地址:辽宁省盘锦市兴隆台区渤海地区兴油小区商网0708栋01号；　电话:7818918;<br />销方开户银行:广发银行股份有限公司盘锦蓝色康桥支行；　银行账号:9550880212687500136;<br />收款人:陈晓峰；　复核人:翟玉清;</div></div>
        </div>
        <div class="by"><span class="red">开票人：</span> 李薇</div>
        <span class="shadow"></span>
        <span class="side">下<br />载<br />次<br />数<br />：<br />1</span>
        <svg class="seal" width="78" height="54" aria-hidden="true" fill="none">
          <path d="M-64 27H123M-64 29.500H123" stroke="#a04040" stroke-width="1"/>
          <ellipse cx="39" cy="26" rx="37" ry="24.500" stroke="#f40d0d" stroke-width="2.600"/>
          <path id="s1" d="M9 28C16 6 62 6 69 28"/><path id="s2" d="M16 37Q39 50 62 37"/>
          <text x="39" y="29" text-anchor="middle" font-size="6" fill="#f23a3a">国家税务总局</text>
          <text font-size="7" fill="#f25a5a"><textPath href="#s2" startOffset="50%" text-anchor="middle">辽宁省税务局</textPath></text>
          <text font-size="6" fill="#f25a5a"><textPath href="#s1" startOffset="50%" text-anchor="middle">全国统一发票监制章</textPath></text>
        </svg>
        <span class="redbox" style="left:356px;top:499px;width:173px;height:51px"></span>
      </div>
      <span class="floating a1">${ret()}</span><span class="floating a2">${ret()}</span>
      <svg class="corners" width="710" height="17" fill="none" aria-hidden="true"><path d="M63 1h20v16M646 1h-21v16" stroke="#a0a0a0"/></svg>
    </div>`;
  }

  private cert() {
    const bars: unknown[] = [];
    let x = 0, s = 9;
    while (x < 96) {
      s = (s * 1103515 + 12345) % 2147483648;
      const w = 1 + ((s >> 10) % 2);
      bars.push(svg`<rect x=${x} width=${w} height="19"/>`);
      x += w + 1 + ((s >> 14) % 2);
    }
    return html`<div class="paper">
      <div class="cert">
        <svg class="bg" width="540" height="769" aria-hidden="true">
          <pattern id="pt" width="45" height="21" patternUnits="userSpaceOnUse"><path d="M12 8l4-6 4 6z" fill="#fbf9e4"/><path d="M24 6h18M2 15h14M24 17h18" stroke="#fdfcf0" stroke-width="1.500"/></pattern>
          <rect width="540" height="769" fill="url(#pt)"/>
        </svg>
        <div class="logo">${box(30, 27, svg`<path d="M10 1h9.500l9.500 19-4 6H5L1 20zM10 1l15 25M19.500 1 5 26M1 20h28M10 1 8 20M19.500 1 22 20" stroke="#d6455a" stroke-width="1.300"/>`)}<span>广发银行</span><i></i><span class="en">CGB</span></div>
        <div class="no"><i></i><span>NO:</span><b>00186319</b></div>
        <div class="ct"><h1>资信证明</h1>Credit Standing Certificate</div>
        <p class="blk cn first">中国石油天然气股份有限公司辽河油田分公司:</p>
        <p class="blk cn">${"　　现确认辽宁辽河金晟达建设实业有限公司，在我行开立账户辽宁辽河金晟达建设实业有限公司，账\n号9550880212687500136，自 2024 年 11 月 28 日起，至 2025 年 11 月 27 日止，该单位在我行办\n理的各项结算业务无不良记录，未与我行建立信贷关系。"}</p>
        <p class="blk">${"    Now we confirm that "}<em>辽宁辽河金晟达建设实业有限公司</em>${" has opened a settlement account in\nthe bank by the name of "}<em>辽宁辽河金晟达建设实业有限公司</em>${" with account number 955098021268750\n0136.During the period from 2024-11-28 to 2025-11-27 the above enterprise does not have\nany bad record for settlement business and does not  have any credit operations handled in\nthe Bank."}</p>
        <p class="blk cn late">${"　　上述内容为我行本证明书所指明期间内，该单位在我行开立账户情况的真实陈述，不包含其他任何\n含义，我行除对证明书所指明时间内陈述事实的真实性负责外，不承担其他任何责任。本证明书经我行\n加盖业务专用章后方能生效。谨此证明，下无正文。"}</p>
        <p class="blk">${"    The above contents faithfully state the information of the enterprise's account opened\nin the Bank during the specified period in the Certificate,and do not certify anything else.\nThe Bank will only be liable for the accuracy of what is stated in the Certificate during\nthe specified period. The Certificate shall come into force only after being stamped the\nBank's corporate seal. The Certificate is hereby presented."}</p>
        <div class="sign"><p>广 发 银 行 股 份 有 限 公 司</p><p>China Guangfa Bank Incorporated Company</p><p>有 效 签 章</p><p>Authorized Signature</p><p>日期    2025-11-28 09:13:57</p><p>Date    2025-11-28 09:13:57</p></div>
        <div class="bar"><svg width="98" height="19" fill="#444" aria-hidden="true">${bars}</svg>CGB1601901</div>
        <svg class="stamp" width="126" height="82" aria-hidden="true" fill="none">
          <ellipse cx="63" cy="41" rx="61" ry="38.500" stroke="#f0574e" stroke-width="2"/>
          <path id="c1" d="M14 38C20 4 106 4 112 38"/>
          <text font-size="11" fill="#f0655c"><textPath href="#c1" startOffset="50%" text-anchor="middle">广发银行股份有限公司</textPath></text>
          <g font-size="7" fill="#f0574e" text-anchor="middle"><text x="62" y="49">盘锦蓝色康桥支行</text><text x="62" y="57">业务专用章</text><text x="62" y="65">验证码 DUZY88W4BU8R</text></g>
        </svg>
      </div>
      <svg class="corners" width="710" height="17" fill="none" aria-hidden="true"><path d="M63 1h20v16M646 1h-21v16" stroke="#a0a0a0"/></svg>
    </div>`;
  }

  private pane2() {
    return html`<aside class="pane">
      <div class="ph"><h2>导航</h2><button aria-label="选项">${bigChev()}</button><button class="x" aria-label="关闭">${cross()}</button></div>
      <div class="find"><input aria-label="搜索" placeholder="在文档中搜索" /><button aria-label="查找">${I.find("#2b579a")}</button>${chev()}</div>
      <div class="ptabs"><button class="t on">标题</button><button class="t">页面</button><button class="more">›</button></div>
      <div class="hint"><p>创建文档的交互式大纲。</p><p>它是跟踪具体位置或快速移动内容的好方式。</p><p>若要开始，请转到"开始"选项卡，并向文档中的标题应用标题样式。</p></div>
    </aside>`;
  }

  private ruler2() {
    const k = 19.54, o = 43;
    const blocks = [57, 165, 299, 378, 522, 688, 821];
    const hide = (x: number, r: number) => blocks.some((b) => x > b - r && x < b + 20 + r);
    const nums = Array.from({ length: 29 }, (_, i) => i * 2 - 2).filter((n) => n !== 0 && !hide(o + n * k, 3));
    const ticks = Array.from({ length: 55 }, (_, i) => i - 1.5).map((n) => o + n * k).filter((x) => x > 5 && !hide(x, 1));
    const grid = (x: number) => svg`<rect x=${x} y="5" width="20" height="16" fill="#c6c6c6"/><rect x=${x + 5} y="8" width="10" height="11" fill="url(#gr)"/>`;
    return html`<svg class="ruler" width="1106" height="30" aria-hidden="true">
      <pattern id="gr" width="2" height="2" patternUnits="userSpaceOnUse"><rect width="1" height="2" fill="#666"/><rect width="2" height="1" fill="#888"/></pattern>
      <rect y="5" width="1106" height="16" fill="#c6c6c6"/><rect x="43" y="5" width="1019" height="16" fill="#fff"/>
      ${ticks.map((x) => svg`<rect x=${x} y="10" width="1" height="6"/>`)}
      ${nums.map((n) => svg`<text x=${o + n * k} y="17" text-anchor="middle">${Math.abs(n)}</text>`)}
      ${[22, ...blocks, 1060].map(grid)}${handle(841, 3)}${rightMark(1065)}
    </svg>`;
  }

  private vruler() {
    const blocks = [114, 188, 263, 337, 409, 471];
    return html`<svg class="vr" width="17" height="826" aria-hidden="true">
      <rect width="17" height="826" fill="#fff"/><rect width="17" height="14" fill="#c6c6c6"/>
      ${Array.from({ length: 28 }, (_, i) => svg`<rect x="6" y=${27 + i * 29} width="5" height="1"/><text transform="translate(12 ${42 + i * 29}) rotate(-90)" text-anchor="middle">${i + 1}</text>`)}
      ${blocks.map((y) => svg`<rect y=${y} width="17" height="7" fill="#c6c6c6"/>`)}
    </svg>`;
  }

  private sheet() {
    const w = [36, 109, 132, 81, 143, 166, 132, 243];
    const rows = [["1.681849", "0022079863"], ["8.670386", "0056885597"], ["0.661263", "0022069711"], ["3.957233", "0084070881"]];
    const m = (on: boolean, t: unknown): Tpl => (on ? html`<mark>${t}</mark>` : html`${t}`);
    return html`<div class="paper">
      <div class="doc">
        <table class="tb">
          <colgroup>${w.map((x) => html`<col width=${x} />`)}</colgroup>
          <tr height="103"><th>序<br />号${ret()}</th><th>项目名称${ret()}</th><th>合同编号${ret()}</th><th>合同金<br />额（万<br />元）${ret()}</th><th>发票开具金额<br />（万元）${ret()}</th><th>发票代码${ret()}</th><th>发票号码${ret()}</th><th>收款方纳税人识别号${ret()}</th></tr>
          ${rows.map(([a, n], i) => html`<tr height="74">
            ${i === 0 ? html`<td rowspan="4">6${ret()}</td><td rowspan="4">通用车辆<br />维修 8${ret()}</td><td rowspan="4">LHYT-<br />CLFWZX-<br />2025-CL-<br />1929${ret()}</td><td rowspan="4">100${ret()}</td>` : nothing}
            <td>${m(i < 3, a)}${ret()}</td><td>${m(i < 3, "/")}${ret()}</td><td>${m(i < 3, "2521200000")}<br />${m(i < 3, n)}${ret()}</td><td>${m(i < 3, "91211103MA0YAY7340")}${ret()}</td></tr>`)}
          <tr height="65"><td colspan="3">合计${ret()}</td><td>605${ret()}</td><td>442.813686${ret()}</td><td>${ret()}</td><td>${ret()}</td><td>${ret()}</td></tr>
        </table>
        <div class="after">${ret()}</div>
        <svg class="ends" width="14" height="420" fill="none" aria-hidden="true">${[5, 109, 182, 257, 331, 404].map((y) => svg`<path d="M11 ${y + 1}H1.500M5 ${y - 3} 1.500 ${y + 1} 5 ${y + 5}M9 ${y - 5}h3" stroke="#8a8a8a"/>`)}</svg>
        <svg class="tops" width="1106" height="14" fill="none" aria-hidden="true"><path d="M133 12.500h33V0M973 12.500h-33V0" stroke="#a0a0a0"/></svg>
        <span class="redbox" style="left:389px;top:336px;width:168px;height:87px"></span>
      </div>
    </div>`;
  }

  render() {
    const st = (sample: string, name: string, kind: string, on = false): Style => ({ sample, name, kind, on });
    const g1 = [
      st("一、", "标题 1", "xl"), st("  1   Aa", "标题 2", "h"), st("1. 1   A", "标题 3", "h"), st("1. 1. 1", "标题 4", "h"), st("1. 1. 1. 1", "标题 5", "m"),
      st("AaBbCc", "标题一、", "big"), st("AaBbCcD", "↲ 表内列...", "n"), st("AaBbCcDdE", "表内正文", "s"), st("AaBbCcDdE", "↲ 表内正...", "n"),
      st("AaBbCcDd", "↲ 列出段...", "n"), st("AaBbCcDdE", "↲ 正文", "s", true), st("1. 1. 1. 1", "标题 6", "m"),
    ];
    const g2 = [st("AaBbCcD", "↲ 表内列...", "n"), st("AaBbCcDd", "表内正文", "s"), st("AaBbCcDd", "↲ 正文", "n", true), st("AaBbCcDd", "↲ 无间隔", "n"), st("AaBb(", "标题 1", "xl")];
    const corner = html`<div class="corner"><button aria-label="制表符">${box(7, 8, svg`<path d="M1 0v6.500h6" stroke="#555" stroke-width="2"/>`)}</button></div>`;
    return html`
      <div class="desk">
        <main class="win one">
          <word-ribbon .docTitle=${"金晟达-通用车辆修理-投标文件(1)  -  Word"} .toolLabel=${"图片工具"} .toolTabs=${["图片格式"]} .fontName=${"宋体"} .gallery=${g1}></word-ribbon>
          <div class="work">
            ${this.pane1()}
            <div class="canvas">
              ${corner}<div class="centre"><span class="blank"></span>${this.ruler1()}</div><span></span>
              <span></span><div class="centre">${this.invoice()}${this.cert()}</div><span></span>
            </div>
          </div>
          <word-status pages="第 833 页，共 995 页" words="80253 个字" zoom="90%" .level=${45}></word-status>
        </main>
        <section class="win two">
          <word-ribbon compact .docTitle=${"特种车辆修理  金晟达 李思文  -  Word"} .toolLabel=${"表格工具"} .toolTabs=${["表设计", "表布局"]} .fontName=${"等线 (西文正文)"} .gallery=${g2}></word-ribbon>
          <div class="work">
            ${this.pane2()}
            <div class="canvas">
              ${corner}<div class="centre">${this.ruler2()}</div><span></span>
              ${this.vruler()}<div class="centre">${this.sheet()}</div><span></span>
            </div>
          </div>
          <word-status pages="第 7 页，共 7 页" words="96 个字" zoom="140%" .level=${55}></word-status>
        </section>
        <div class="behind"><div class="blue">${cross("#b3c4df")}<i></i></div><div class="pale"></div><div class="num">6 ı</div><div class="sheet"></div></div>
        <section class="note">
          <div class="cap">${box(17, 17, svg`<path d="M3 1.500h12l-1.500 14H1z" fill="#8fd0e0" stroke="#5a9aab"/><path d="M4 5h9M4 8h8.500M3.500 11H12" stroke="#e8fbff"/><path d="M4 0v3M7 0v3M10 0v3M13 0v3" stroke="#555"/>`)}*1</div>
          <div class="menu">文件(F)</div>
          <pre>${notes.join("\n")}</pre>
          <div class="sb">${box(6, 10, svg`<path d="M5 1 1 5l4 4" stroke="#444" stroke-width="1.500"/>`)}<i></i></div>
          <div class="low"></div>
        </section>
      </div>
      <div class="taskbar"><i></i><i class="g"></i><i class="far"></i><i class="g"></i></div>`;
  }
}
